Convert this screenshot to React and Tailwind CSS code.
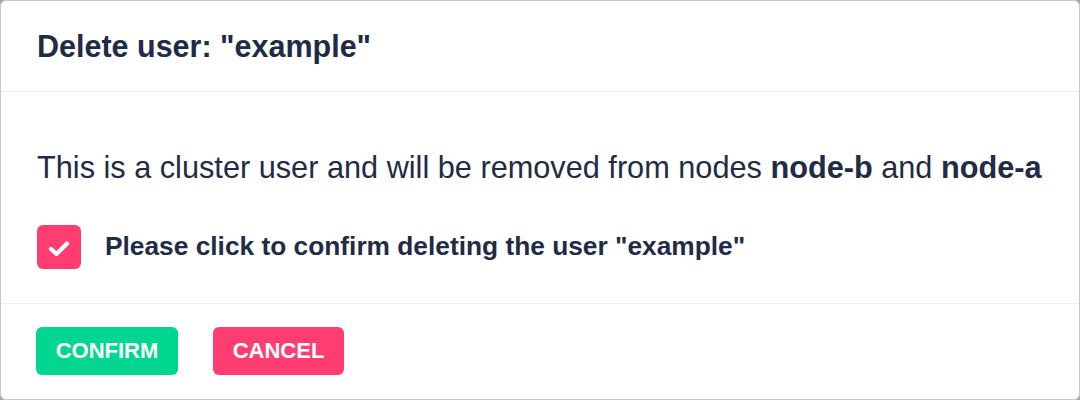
import { useState } from 'react'

export default function App() {
    const [checked, setChecked] = useState(true)

    return (
        <div className="w-[1080px] h-[400px] bg-[#a9a9a9] font-['Liberation_Sans',Arial,sans-serif] text-[#222b45]">
            <div className="w-full h-full bg-white border border-[#c9c9c9] rounded-[6px] flex flex-col">
                {/* Header */}
                <div className="h-[91px] flex items-center px-[36px] pt-[2px] border-b border-[#edf1f7]">
                    <h1 className="text-[30.5px] font-bold">Delete user: "example"</h1>
                </div>

                {/* Body */}
                <div className="flex-1 px-[36px] pt-[58px] border-b border-[#edf1f7]">
                    <p className="text-[30.7px] leading-[36px] whitespace-nowrap">
                        This is a cluster user and will be removed from nodes <b>node-b</b> and <b>node-a</b>
                    </p>
                    <label className="flex items-center gap-[24px] mt-[39px] cursor-pointer">
                        <button
                            type="button"
                            onClick={() => setChecked(!checked)}
                            className="w-[44px] h-[44px] rounded-[6px] bg-[#ff3d71] flex items-center justify-center shrink-0"
                        >
                            {checked && (
                                <svg width="24" height="20" viewBox="0 0 24 20" fill="none" className="mt-[3px]">
                                    <path d="M4 10 L9.5 15 L20 4.5" stroke="white" strokeWidth="4.2" strokeLinecap="round" strokeLinejoin="round" />
                                </svg>
                            )}
                        </button>
                        <span className="text-[26.3px] font-bold">Please click to confirm deleting the user "example"</span>
                    </label>
                </div>

                {/* Footer */}
                <div className="h-[95px] flex items-center gap-[35px] pl-[35px] pb-[2px]">
                    <button className="h-[48px] w-[142px] rounded-[6px] bg-[#00d68f] text-white text-[22px] font-bold uppercase">
                        Confirm
                    </button>
                    <button className="h-[48px] w-[131px] rounded-[6px] bg-[#ff3d71] text-white text-[22px] font-bold uppercase">
                        Cancel
                    </button>
                </div>
            </div>
        </div>
    )
}
